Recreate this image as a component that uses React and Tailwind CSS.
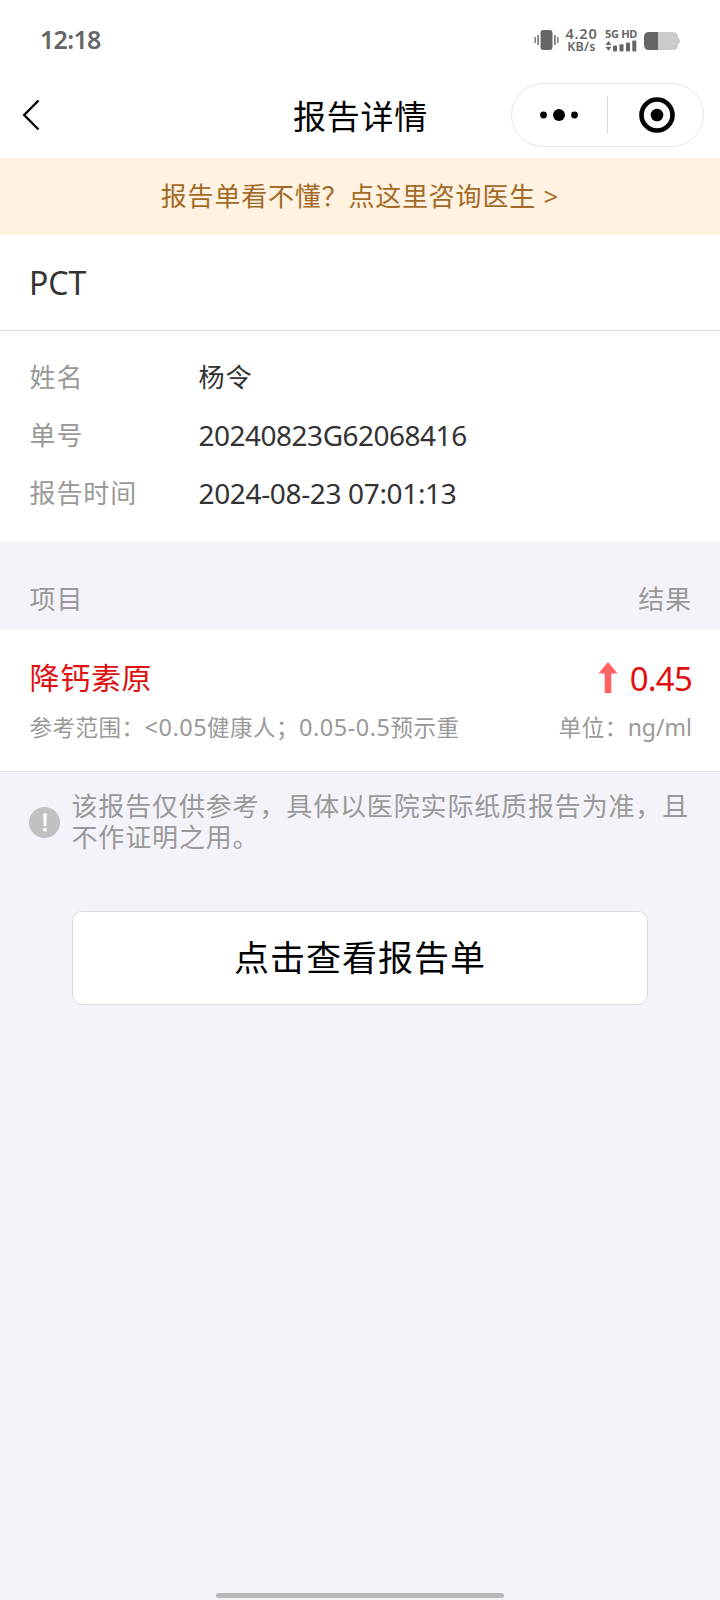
import React from "react";

const patient = [
  { label: "姓名", value: "杨令", style: "text-[26px] tracking-[0.9px]" },
  { label: "单号", value: "20240823G62068416", style: "text-[28px] tracking-[-0.5px]" },
  { label: "报告时间", value: "2024-08-23 07:01:13", style: "text-[28px] tracking-[-0.35px]" },
];

const StatusBar = () => (
  <div className="h-[72px] pl-10 pr-10 pt-2 flex items-center justify-between text-[#666]">
    <span className="pb-[2px] text-[25px] font-semibold tracking-[-0.7px] leading-none">12:18</span>
    <div className="flex items-center">
      <svg width="25" height="22" viewBox="0 0 25 22" fill="#666">
        <rect x="6.5" y="1" width="12" height="20" rx="3" />
        <rect x="0.5" y="8" width="1.3" height="6" />
        <rect x="3.3" y="6" width="1.5" height="10" />
        <rect x="20.2" y="6" width="1.5" height="10" />
        <rect x="23.2" y="8" width="1.3" height="6" />
      </svg>
      <div className="ml-[6px] w-[33px] flex flex-col items-center leading-none font-semibold">
        <span className="text-[14.5px] leading-[13px] tracking-[0.8px]">4.20</span>
        <span className="text-[12.5px] leading-[13px] tracking-[0.3px]">KB/s</span>
      </div>
      <div className="ml-[7px] w-8 flex flex-col">
        <span className="text-[11px] leading-[12px] font-bold tracking-[-0.3px] whitespace-nowrap">5G HD</span>
        <svg width="32" height="12" viewBox="0 0 32 12" fill="#666">
          <path d="M0.5 5 L3.5 1 L6.5 5 Z M0.5 6.8 L6.5 6.8 L3.5 10.8 Z" />
          <rect x="8" y="5.5" width="4" height="6" rx="1" />
          <rect x="14.5" y="4.3" width="4" height="7.2" rx="1" />
          <rect x="21" y="2.5" width="4" height="9" rx="1" />
          <rect x="27.3" y="0.5" width="4" height="11" rx="1" />
        </svg>
      </div>
      <svg className="ml-[7px] mt-[2px]" width="36" height="18" viewBox="0 0 36 18">
        <path d="M14 0 H29 Q34 0 34 5 V6 Q36 6.5 36 9 Q36 11.5 34 12 V13 Q34 18 29 18 H14 Z" fill="#cbcbcb" />
        <path d="M14 0 H5 Q0 0 0 5 V13 Q0 18 5 18 H14 Z" fill="#666" />
      </svg>
    </div>
  </div>
);

const NavBar = () => (
  <div className="h-[86px] pl-[22px] pr-4 grid grid-cols-[1fr_auto_1fr] items-center">
    <svg width="20" height="32" viewBox="0 0 20 32" fill="none" stroke="#000" strokeWidth="2.4">
      <path d="M16.5 1.5 L2.2 16 L16.5 30.5" />
    </svg>
    <h1 className="pt-[2px] pr-[4px] -ml-[1px] text-[33px] tracking-[0.8px] leading-none text-black">报告详情</h1>
    <div className="justify-self-end w-[193px] h-16 rounded-full border border-[#e5e5e5] flex items-center">
      <div className="flex-1 pr-[2px] flex justify-center">
        <svg width="38" height="12" viewBox="0 0 38 12">
          <circle cx="3.5" cy="6" r="3.4" />
          <circle cx="19" cy="6" r="6" />
          <circle cx="34.5" cy="6" r="3.4" />
        </svg>
      </div>
      <div className="w-px h-[38px] bg-[#dcdcdc]" />
      <div className="flex-1 pl-[2px] flex justify-center">
        <svg width="36" height="36" viewBox="0 0 36 36">
          <circle cx="18" cy="18" r="15.5" fill="none" stroke="#000" strokeWidth="4.6" />
          <circle cx="18" cy="18" r="6.3" />
        </svg>
      </div>
    </div>
  </div>
);

const App = () => {
  return (
    <div className="w-[720px] h-[1600px] bg-[#f4f3f9] flex flex-col font-['Noto_Sans','Noto_Sans_CJK_SC',sans-serif] text-[#333]" lang="zh-CN">
      <header className="bg-white">
        <StatusBar />
        <NavBar />
      </header>

      <div className="h-[77px] bg-[#fff2e0] text-[#a36a28] text-[26px] tracking-[0.8px] flex items-center justify-center">
        报告单看不懂？点这里咨询医生 &gt;
      </div>

      <section className="bg-white">
        <div className="h-24 px-[29px] flex items-center border-b border-[#dedede] text-[32px]">
          PCT
        </div>
        <div className="h-[211px] px-[29.5px] pt-[17px]">
          {patient.map((item) => (
            <div key={item.label} className="h-[58px] flex items-center">
              <span className="w-[169px] text-[26px] tracking-[0.9px] text-[#999]">{item.label}</span>
              <span className={item.style}>{item.value}</span>
            </div>
          ))}
        </div>
      </section>

      <div className="h-[88px] pl-[29.5px] pr-7 pt-[26px] flex items-center justify-between text-[26px] tracking-[0.9px] text-[#999]">
        <span>项目</span>
        <span>结果</span>
      </div>

      <section className="h-[142px] pl-[29.5px] pr-7 pt-6 bg-white border-b border-[#e6e6e8]">
        <div className="h-[47px] flex items-center justify-between text-[#e01010]">
          <span className="text-[30px] tracking-[0.7px]">降钙素原</span>
          <div className="flex items-center">
            <svg className="mr-3" width="20" height="31" viewBox="0 0 20 31" fill="#ff6262">
              <path d="M10 0 L19.5 11.5 H13.3 V31 H6.7 V11.5 H0.5 Z" />
            </svg>
            <span className="pt-[2px] text-[33px] tracking-[-0.8px]">0.45</span>
          </div>
        </div>
        <div className="h-[52px] pt-[1px] flex items-center justify-between text-[22.5px] tracking-[0.5px] text-[#999]">
          <span>
            参考范围：<span className="text-[23.5px]">&lt;0.05</span>健康人；
            <span className="text-[23.5px]">0.05-0.5</span>预示重
          </span>
          <span>
            单位：<span className="text-[23px] tracking-[0px]">ng/ml</span>
          </span>
        </div>
      </section>

      <div className="mt-[19px] pl-[29px] flex items-center text-[#999]">
        <div className="w-[31px] h-[31px] rounded-full bg-[#c1c1c1] flex items-center justify-center">
          <svg width="6" height="19" viewBox="0 0 6 19" fill="#fff">
            <path d="M1.2 0.5 H4.8 L4.2 13 H1.8 Z" />
            <circle cx="3" cy="16.7" r="1.9" />
          </svg>
        </div>
        <p className="ml-[11.5px] text-[26px] tracking-[0.85px] leading-[31px]">
          该报告仅供参考，具体以医院实际纸质报告为准，且
          <br />
          不作证明之用。
        </p>
      </div>

      <button className="mt-[58px] mx-[72px] h-[94px] rounded-[10px] border border-[#dcdcde] bg-white text-black text-[35px] tracking-[1px]">
        点击查看报告单
      </button>

      <div className="mt-auto mb-[2px] mx-auto w-72 h-[5px] rounded-full bg-[#b9b9bb]" />
    </div>
  );
};

export default App;
